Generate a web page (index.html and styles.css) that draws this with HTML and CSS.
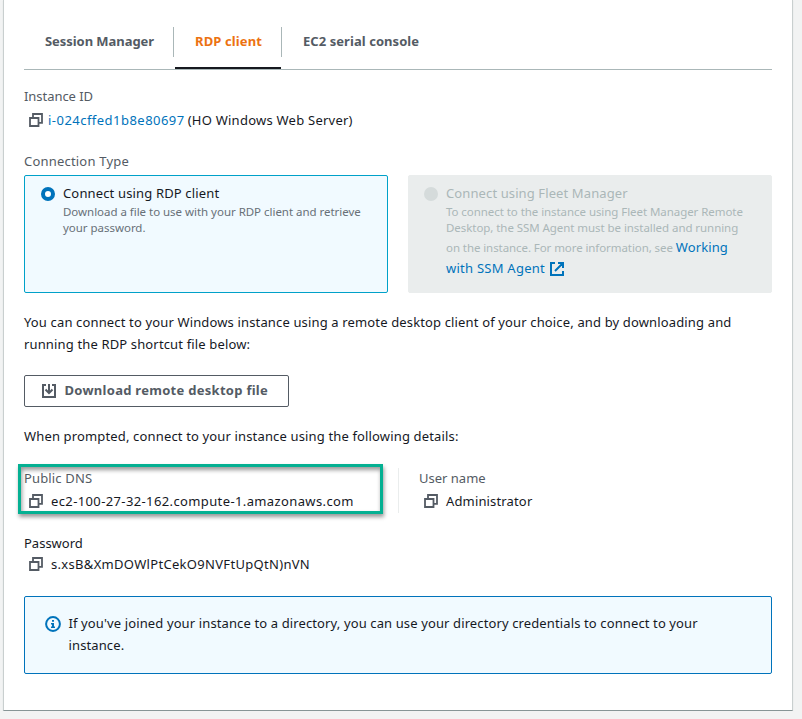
FILE: index.html
```html
<!DOCTYPE html>
<html lang="en">
<head>
<meta charset="utf-8">
<title>Connect to instance</title>
<link rel="stylesheet" href="styles.css">
</head>
<body>
<svg class="defs" width="0" height="0" aria-hidden="true">
  <symbol id="copy" viewBox="0 0 14 14">
    <path d="M1 5h8.500v8H1zM4 4.500V1h9v8.800H10" fill="none" stroke="currentColor" stroke-width="1.800"/>
  </symbol>
</svg>
<main class="panel">
  <nav class="tabs">
    <a class="tab tab-session">Session Manager</a>
    <a class="tab tab-rdp">RDP client</a>
    <a class="tab tab-serial">EC2 serial console</a>
  </nav>

  <section class="field instance">
    <div class="label">Instance ID</div>
    <div class="value"><svg class="copy"><use href="#copy"/></svg><a class="link id">i-024cffed1b8e80697</a><span class="name">(HO Windows Web Server)</span></div>
  </section>

  <section class="connection">
    <div class="label">Connection Type</div>
    <div class="tiles">
      <div class="tile selected">
        <span class="radio"></span>
        <div class="tile-body">
          <div class="tile-title">Connect using RDP client</div>
          <div class="desc">Download a file to use with your RDP client and retrieve<br>your password.</div>
        </div>
      </div>
      <div class="tile disabled">
        <span class="radio"></span>
        <div class="tile-body">
          <div class="tile-title">Connect using Fleet Manager</div>
          <div class="desc">To connect to the instance using Fleet Manager Remote<br>Desktop, the SSM Agent must be installed and running</div>
          <div class="desc desc-tall">on the instance. For more information, see <a class="link">Working</a></div>
          <div class="desc-link"><a class="link">with SSM Agent</a><svg class="external" viewBox="0 0 14 14"><path d="M5 1H1v12h12V9M8 1h5v5M12.500 1.500L5 9" fill="none" stroke="currentColor" stroke-width="2"/></svg></div>
        </div>
      </div>
    </div>
  </section>

  <p class="intro">You can connect to your Windows instance using a remote desktop client of your choice, and by downloading and<br>running the RDP shortcut file below:</p>

  <button class="download"><svg class="download-icon" viewBox="0 0 14 14"><path d="M4 1H1v12h12V1h-3M7 0v9M3.500 5.500L7 9l3.500-3.500" fill="none" stroke="currentColor" stroke-width="2"/></svg>Download remote desktop file</button>

  <p class="prompt">When prompted, connect to your instance using the following details:</p>

  <div class="details">
    <section class="field dns">
      <div class="label">Public DNS</div>
      <div class="value"><svg class="copy"><use href="#copy"/></svg><span class="host">ec2-100-27-32-162.compute-1.amazonaws.com</span></div>
      <span class="highlight"></span>
    </section>
    <section class="field user">
      <div class="label">User name</div>
      <div class="value"><svg class="copy"><use href="#copy"/></svg><span>Administrator</span></div>
    </section>
  </div>

  <section class="field password">
    <div class="label">Password</div>
    <div class="value"><svg class="copy"><use href="#copy"/></svg><span class="secret">s.xsB&amp;XmDOWlPtCekO9NVFtUpQtN)nVN</span></div>
  </section>

  <aside class="alert">
    <svg class="info" viewBox="0 0 16 16"><circle cx="8" cy="8" r="6.900" fill="none" stroke="currentColor" stroke-width="2"/><path d="M7 4h2v1.700H7zM6 7h3v3.500h1V12H6v-1.500h1V8.500H6z" fill="currentColor"/></svg>
    <p>If you've joined your instance to a directory, you can use your directory credentials to connect to your<br>instance.</p>
  </aside>
</main>
</body>
</html>
```
FILE: styles.css
```css
* { box-sizing: border-box; }
body {
  margin: 0;
  background: #f2f3f3;
  color: #16191f;
  font: 13px/22px "Noto Sans", "Open Sans", sans-serif;
  letter-spacing: .15px;
  white-space: nowrap;
}
p { margin: 0; }
svg { display: block; flex: none; }
.defs { position: absolute; }
.panel {
  width: 790px;
  height: 711px;
  margin-left: 3px;
  padding: 0 20px;
  background: #fff;
  border: 1px solid #c9cfcf;
  border-top: 0;
  border-bottom-color: #879596;
  box-shadow: 0 1px 1px #d5dbdb;
}
.tabs {
  display: flex;
  height: 70px;
  padding-top: 27px;
  border-bottom: 1px solid #aab7b8;
}
.tab {
  height: 30px;
  line-height: 29px;
  font-weight: 700;
  color: #545b64;
  letter-spacing: 0;
}
.tab-session { width: 150px; padding-left: 21px; border-right: 1px solid #aab7b8; letter-spacing: -.06px; }
.tab-rdp { position: relative; width: 108px; padding-left: 21px; border-right: 1px solid #aab7b8; color: #ec7211; letter-spacing: .12px; }
.tab-rdp::after {
  content: "";
  position: absolute;
  left: 1px;
  right: 0;
  top: 40px;
  height: 2px;
  background: #16191f;
}
.tab-serial { padding-left: 21px; letter-spacing: .06px; }
.label { color: #545b64; height: 22px; }
.value { display: flex; align-items: center; height: 22px; padding-left: 5px; }
.value span { margin-left: 8px; }
.copy { width: 14px; height: 14px; color: #545b64; }
.link { color: #0073bb; }
.instance { padding-top: 15px; height: 80px; }
.instance .label { letter-spacing: -.05px; }
.instance .value { margin-top: 2px; }
.instance .id { margin-left: 5px; letter-spacing: .47px; }
.instance .name { margin-left: 3px; letter-spacing: .24px; }
.connection { height: 161px; }
.connection > .label { height: 25px; letter-spacing: .2px; }
.tiles { display: grid; grid-template-columns: 364px 364px; gap: 20px; }
.tile {
  display: flex;
  height: 118px;
  padding: 7px 0 0 16px;
  border: 1px solid #00a1c9;
  border-radius: 2px;
  background: #f1faff;
}
.radio { width: 14px; height: 14px; margin: 4px 8px 0 0; border-radius: 50%; flex: none; }
.selected .radio { border: 4px solid #0073bb; background: #fff; }
.tile-title { height: 21px; line-height: 20px; }
.desc { font-size: 11.5px; line-height: 16px; letter-spacing: -.03px; color: #687078; }
.disabled { padding-left: 15px; background: #eaeded; border-color: #eaeded; color: #aab7b8; }
.disabled .tile-title { letter-spacing: .11px; }
.disabled .radio { background: #d5dbdb; }
.disabled .desc { color: #aab7b8; letter-spacing: -.06px; }
.disabled .desc-tall { height: 22px; line-height: 22px; letter-spacing: -.08px; }
.desc-tall .link { font-size: 13px; letter-spacing: .1px; }
.desc-link { display: flex; height: 20px; line-height: 20px; letter-spacing: .25px; }
.external { width: 14px; height: 14px; margin: 4px 0 0 5px; color: #0073bb; }
.intro { height: 64px; letter-spacing: .145px; }
.download {
  display: flex;
  align-items: center;
  width: 265px;
  height: 32px;
  padding: 0 0 2px 17px;
  border: 1px solid #545b64;
  border-radius: 2px;
  background: #fff;
  color: #545b64;
  font: inherit;
  font-weight: 700;
  letter-spacing: .28px;
}
.download-icon { width: 14px; height: 14px; margin: 2px 8.5px 0 0; }
.prompt { margin-top: 18px; height: 42px; }
.details { display: flex; height: 65px; }
.dns { position: relative; width: 374px; }
.highlight {
  position: absolute;
  left: -6px;
  top: -3px;
  width: 365px;
  height: 50px;
  border: 3px solid #04b092;
  box-shadow: 1px 3px 4px rgba(0, 0, 0, .4), inset 1px 3px 4px rgba(0, 0, 0, .4);
}
.dns .value, .user .value { margin-top: 1px; }
.dns .host { letter-spacing: .38px; }
.user { height: 45px; margin-top: 1px; padding-left: 20px; border-left: 1px solid #eaeded; }
.user .label { margin-top: -1px; letter-spacing: 0; }
.password .label { color: #16191f; height: 21px; letter-spacing: 0; }
.password .secret { letter-spacing: .31px; }
.alert {
  display: flex;
  height: 78px;
  margin-top: 21px;
  padding: 15px 0 0 20px;
  border: 1px solid #0073bb;
  border-radius: 2px;
  background: #f1faff;
  letter-spacing: .12px;
}
.info { width: 16px; height: 16px; margin: 4px 7.5px 0 0; color: #0073bb; }
```
